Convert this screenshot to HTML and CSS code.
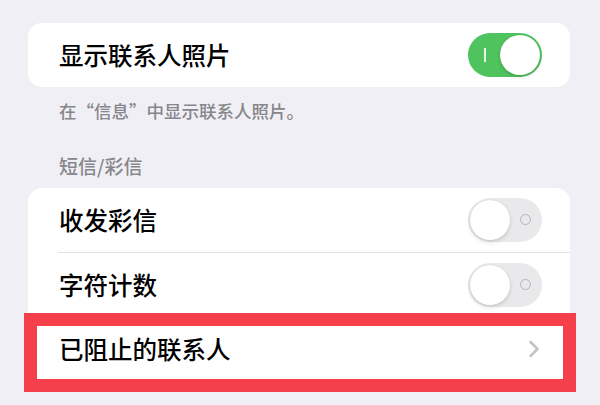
FILE: index.html
```html
<!DOCTYPE html>
<html lang="zh-CN">
<head>
<meta charset="utf-8">
<link rel="stylesheet" href="styles.css">
</head>
<body>
<div class="page">
  <div class="card first">
    <div class="row">
      <span class="label">显示联系人照片</span>
      <span class="toggle on"><span class="mark-i"></span><span class="knob"></span></span>
    </div>
  </div>
  <div class="footer">在“信息”中显示联系人照片。</div>
  <div class="header">短信/彩信</div>
  <div class="card">
    <div class="row">
      <span class="label">收发彩信</span>
      <span class="toggle off"><span class="knob"></span><span class="mark-o"></span></span>
    </div>
    <div class="sep"></div>
    <div class="row">
      <span class="label">字符计数</span>
      <span class="toggle off"><span class="knob"></span><span class="mark-o"></span></span>
    </div>
    <div class="row highlighted">
      <span class="label">已阻止的联系人</span>
      <svg class="chev" width="12" height="18" viewBox="0 0 12 18"><path d="M2.5 2 L9.5 9 L2.5 16" fill="none" stroke="#c4c4c8" stroke-width="2.6" stroke-linecap="round" stroke-linejoin="round"/></svg>
    </div>
  </div>
</div>
</body>
</html>
```
FILE: styles.css
```css
html, body {
  margin: 0;
  padding: 0;
  background: #f0eff5;
}
body {
  width: 600px;
  height: 405px;
  overflow: hidden;
  font-family: "Noto Sans CJK SC", "Noto Sans", sans-serif;
}
.page {
  padding: 23px 30px 0 28px;
}
.card {
  background: #ffffff;
  border-radius: 14px;
  margin-top: 10px;
}
.card.first {
  margin-top: 0;
}
.row {
  height: 64px;
  display: flex;
  align-items: center;
  justify-content: space-between;
  padding: 0 28px 0 31px;
  position: relative;
}
.label {
  font-size: 24.5px;
  font-weight: 500;
  color: #000;
  line-height: 30px;
}
.sep {
  height: 1px;
  background: #e3e3e7;
  margin-left: 30px;
}
.footer {
  margin-top: 12px;
  padding-left: 31px;
  font-size: 17.5px;
  font-weight: 500;
  line-height: 24px;
  color: #86868b;
}
.header {
  margin-top: 31px;
  padding-left: 31px;
  font-size: 19px;
  font-weight: 500;
  line-height: 24px;
  color: #86868b;
}
.toggle {
  width: 74px;
  height: 44px;
  border-radius: 22px;
  position: relative;
  box-sizing: border-box;
  flex: none;
}
.toggle.on {
  background: #4fc35e;
}
.toggle.off {
  background: #e9e9ec;
}
.knob {
  position: absolute;
  top: 2px;
  width: 40px;
  height: 40px;
  border-radius: 50%;
  background: #fff;
  box-shadow: 0 2px 4px rgba(0,0,0,0.14), 0 0 1px rgba(0,0,0,0.12);
}
.toggle.on .knob {
  right: 2px;
}
.toggle.off .knob {
  left: 2px;
}
.mark-i {
  position: absolute;
  left: 16px;
  top: 15px;
  width: 1.5px;
  height: 14px;
  background: rgba(255,255,255,0.85);
}
.mark-o {
  position: absolute;
  right: 11px;
  top: 16px;
  width: 9px;
  height: 9px;
  border: 1.6px solid #b3b3b8;
  border-radius: 50%;
}
.chev {
  margin-right: 2px;
}
.highlighted::after {
  content: "";
  position: absolute;
  top: -4px;
  left: -4px;
  right: -6px;
  bottom: -11px;
  border: 13px solid #f5404c;
  pointer-events: none;
}
```
